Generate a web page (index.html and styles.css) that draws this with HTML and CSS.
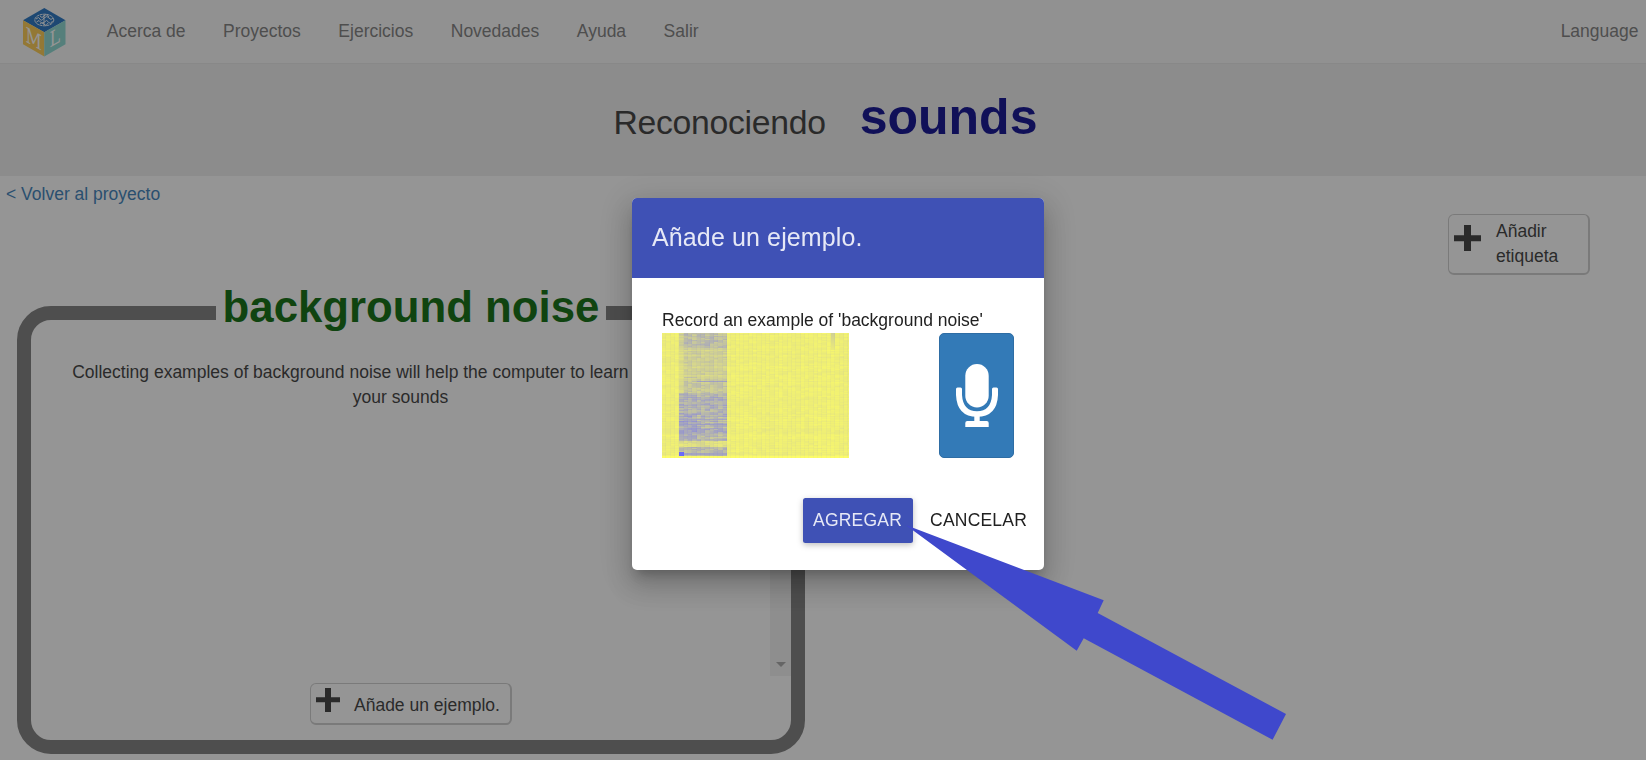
FILE: index.html
```html
<!DOCTYPE html>
<html lang="es">
<head>
<meta charset="utf-8">
<title>Reconociendo sounds</title>
<link rel="stylesheet" href="styles.css">
</head>
<body>
<nav class="navbar">
  <svg class="logo" width="43" height="49" viewBox="0 0 43 49">
    <path fill="#1a6cbe" d="M21.3 0 42.5 12.2 21.3 24.3 0 12.2z"/>
    <path fill="#fcc847" d="M0 12.2 21.3 24.3V48.5L0 36.3z"/>
    <path fill="#84d5ce" d="M42.5 12.2 21.3 24.3V48.5L42.5 36.3z"/>
    <g fill="none" stroke="#fff" stroke-width=".9">
      <ellipse cx="21.3" cy="12" rx="9.5" ry="5.800" stroke-dasharray="3 .5"/>
      <path d="M21 6.5v11M13 11q3-3 4 0t4-1q3-3 5 0t4 0M13.5 14q3-3 4 0t4 0q2-3 4 0t4-1M17 8q2 3 4 0t5 1M17 16q2-3 4 0t4-1"/>
    </g>
    <text class="logo-letter" transform="matrix(.76 .433 0 1 2.600 33.500)">M</text>
    <text class="logo-letter" transform="matrix(.76 -.433 0 1 26.600 39.800)">L</text>
  </svg>
  <a class="nav-link">Acerca de</a>
  <a class="nav-link">Proyectos</a>
  <a class="nav-link">Ejercicios</a>
  <a class="nav-link">Novedades</a>
  <a class="nav-link">Ayuda</a>
  <a class="nav-link">Salir</a>
  <a class="nav-link language">Language</a>
</nav>
<header class="banner"><span class="banner-lead">Reconociendo</span><span class="banner-name">sounds</span></header>
<div class="toolbar">
  <a class="back">&lt; Volver al proyecto</a>
  <button class="btn add-label">
    <svg class="plus-large" width="27" height="27" viewBox="0 0 27 27"><path d="M10 0h7v10.3h10v6H17V26h-7v-9.700H0v-6h10z"/></svg>
    <span>Añadir<br>etiqueta</span>
  </button>
</div>
<main class="bucket">
  <h2 class="bucket-title">background noise</h2>
  <div class="bucket-scroll">
    <p class="hint">Collecting examples of background noise will help the computer to learn to recognize<br>your sounds</p>
    <div class="scrollbar"><i class="scroll-arrow"></i></div>
  </div>
  <button class="btn add-example">
    <svg class="plus-small" width="24" height="24" viewBox="0 0 24 24"><path d="M9 0h6v9.300h9v5h-9V24H9v-9.700H0v-5h9z"/></svg>
    <span>Añade un ejemplo.</span>
  </button>
</main>

<div class="backdrop">
  <section class="dialog">
    <h3 class="dialog-title">Añade un ejemplo.</h3>
    <div class="dialog-body">
      <div class="prompt">Record an example of 'background noise'</div>
      <div class="recorder">
        <canvas class="spectrogram" id="spectrogram" width="187" height="125"></canvas>
        <button class="mic">
          <svg width="42" height="63" viewBox="0 0 42 63">
            <rect x="9.300" y="0" width="23.400" height="43.500" rx="11.700" fill="#fff"/>
            <path d="M0 25q0-1.500 1.500-1.500h3q1.500 0 1.500 1.500v6Q7 47.200 21 47.200Q35 47.200 36 31v-6q0-1.500 1.500-1.500h3q1.500 0 1.500 1.500v6Q41 52.800 21 52.800Q1 52.800 0 31z" fill="#fff"/>
            <path d="M18.300 50h5.400v7h7q2 0 2 2v4H9.300v-4q0-2 2-2h7z" fill="#fff"/>
          </svg>
        </button>
      </div>
    </div>
    <div class="actions">
      <button class="action primary">AGREGAR</button>
      <button class="action">CANCELAR</button>
    </div>
  </section>
</div>
<svg class="pointer" width="1646" height="760" viewBox="0 0 1646 760"><path d="M905.700 525 1103.700 600.300 1097.700 613 1286 714 1272.600 739.700 1083.700 638.300 1076.700 650.700z"/></svg>
<script src="spectrogram.js"></script>
</body>
</html>
```
FILE: styles.css
```css
* { box-sizing: border-box; }
body {
  margin: 0;
  height: 760px;
  overflow: hidden;
  background: #fff;
  color: #333;
  font: 17.5px/25px "Liberation Sans", Arial, sans-serif;
}
button { font: inherit; color: inherit; text-align: left; }
.navbar {
  display: flex;
  align-items: flex-start;
  height: 64px;
  padding: 8px 7.5px 0 23px;
  background: #f8f8f8;
  border-bottom: 1px solid #e7e7e7;
  color: #777;
}
.logo { margin-right: 22px; overflow: visible; }
.logo-letter { font: 21px "DejaVu Serif", serif; fill: #fff; }
.nav-link { padding: 10.500px 18.750px 0; }
.language { margin-left: auto; padding-right: 0; }
.banner {
  display: flex;
  align-items: baseline;
  justify-content: center;
  gap: 34px;
  height: 112px;
  padding-top: 25px;
  padding-left: 5px;
  background: #eee;
}
.banner-lead { font-size: 33.750px; letter-spacing: -.3px; }
.banner-name { font-size: 50px; line-height: 57px; font-weight: bold; color: #00008b; }
.toolbar {
  display: flex;
  justify-content: space-between;
  height: 130px;
  padding: 6px 56px 0 6px;
}
.back { color: #337ab7; }
.btn {
  display: flex;
  background: #fff;
  border: solid #ccc;
  border-width: 1px 2px 2px 1px;
  border-radius: 6px;
}
.btn path { fill: #333; }
.add-label { width: 142px; height: 61px; margin-top: 32px; padding: 4px 5px; gap: 15px; }
.plus-large { margin-top: 6px; }
.bucket {
  display: flex;
  flex-direction: column;
  align-items: center;
  width: 788px;
  height: 448px;
  margin-left: 17px;
  border: 14px solid #777;
  border-radius: 34px;
}
.bucket-title {
  margin: -38px 0 6px;
  padding: 0 6.250px;
  background: #fff;
  color: #006400;
  font-size: 43.750px;
  line-height: 50px;
}
.bucket-scroll { display: flex; width: 100%; height: 338px; }
.hint { flex: 1; margin: 22px 0 0; text-align: center; }
.scrollbar {
  display: flex;
  align-items: flex-end;
  justify-content: center;
  width: 21px;
  background: #f1f1f1;
  padding-bottom: 9px;
}
.scroll-arrow { border: solid transparent; border-width: 5px 5px 0; border-top-color: #a3a3a3; }
.add-example { width: 202px; height: 42px; margin: 7px 0 0 0; padding: 4px 5px; gap: 14px; }
.add-example span { padding-top: 5px; white-space: nowrap; }
.plus-small { flex: none; }
.backdrop {
  position: fixed;
  inset: 0;
  padding: 198px 0 0 632px;
  background: rgba(33, 33, 33, .48);
}
.dialog {
  width: 412px;
  height: 372px;
  overflow: hidden;
  border-radius: 5px;
  background: #fff;
  color: #212121;
  box-shadow: 0 9px 10px -5px rgba(0, 0, 0, .2), 0 16px 24px 2.500px rgba(0, 0, 0, .14), 0 6px 30px 5px rgba(0, 0, 0, .12);
}
.dialog-title {
  height: 80px;
  margin: 0;
  padding-left: 20px;
  background: #3f51b5;
  color: rgba(255, 255, 255, .87);
  font-size: 25px;
  font-weight: normal;
  line-height: 79px;
  letter-spacing: .125px;
}
.dialog-body { padding: 30px 30px 0; }
.prompt { white-space: nowrap; }
.recorder { display: flex; justify-content: space-between; }
.mic {
  display: flex;
  align-items: center;
  justify-content: center;
  width: 75px;
  height: 125px;
  padding: 0 0 0 1px;
  background: #337ab7;
  border: 1px solid #2e6da4;
  border-radius: 5px;
}
.actions { display: flex; justify-content: flex-end; gap: 7px; padding: 40px 7px 0; }
.action {
  height: 45px;
  padding: 0 10px;
  border: 0;
  border-radius: 2.500px;
  background: transparent;
  letter-spacing: .2px;
}
.primary {
  width: 110px;
  background: #3f51b5;
  color: rgba(255, 255, 255, .87);
  box-shadow: 0 2px 6px rgba(0, 0, 0, .26);
}
.pointer { position: fixed; inset: 0; fill: #3f48cc; }
```
FILE: spectrogram.js
```js
// Columns are time slices, rows are frequency bins; louder bins shift from yellow to blue.
const ctx = document.getElementById("spectrogram").getContext("2d");
let seed = 7;
const rand = () => (seed = (seed * 16807) % 2147483647) / 2147483647;
const colW = 13 / 3;
const rows = 125;
const rowNoise = Array.from({ length: rows }, rand);

for (let c = 0; c < 44; c++) {
  const loud = c >= 4 && c < 15;
  const colNoise = rand();
  let cell = rand();
  for (let y = 0; y < rows; y++) {
    if (rand() < 0.6) cell = rand();
    let v = 0.05 + 0.05 * cell + 0.04 * rowNoise[y] + 0.02 * colNoise;
    if (loud) {
      const n = rowNoise[y];
      if (y < 15) v = 0.28 + 0.18 * cell + 0.08 * n;
      else if (y < 46) v = 0.2 + 0.1 * cell + 0.1 * n;
      else if (y < 60) v = 0.26 + 0.14 * cell + 0.06 * n;
      else if (y < 108) v = 0.32 + 0.18 * cell + 0.14 * n;
      else if (y < 114) v = 0.14 + 0.14 * cell;
      else if (y < 123) v = 0.36 + 0.18 * cell;
      if (c === 4 && y < 60) v *= 0.7;
      if (c < 8 && y > 80 && y < 106) v += 0.07;
      if (y === 48 && c > 7) v = 0.6;
      if (y === 44 && c > 4 && c < 8) v = 0.4;
      if (y === 86) v = 0.58;
      if (y === 91) v = 0.62;
      if (y === 120 || y === 121) v = 0.58;
      if (c === 4 && y > 118 && y < 123) v = 0.95;
    }
    if (c === 39 && y < 17) v = 0.3 - y * 0.01;
    if (y > 122) v = 0.02;
    const x = Math.round(c * colW);
    const next = Math.round((c + 1) * colW);
    const paint = (left, width, level) => {
      ctx.fillStyle = `rgb(${255 - 155 * level},${255 - 155 * level},${100 + 155 * level})`;
      ctx.fillRect(left, y, width, 1);
    };
    paint(x, next - x, v);
    paint(next - 1, 1, v + 0.04);
  }
}
```
